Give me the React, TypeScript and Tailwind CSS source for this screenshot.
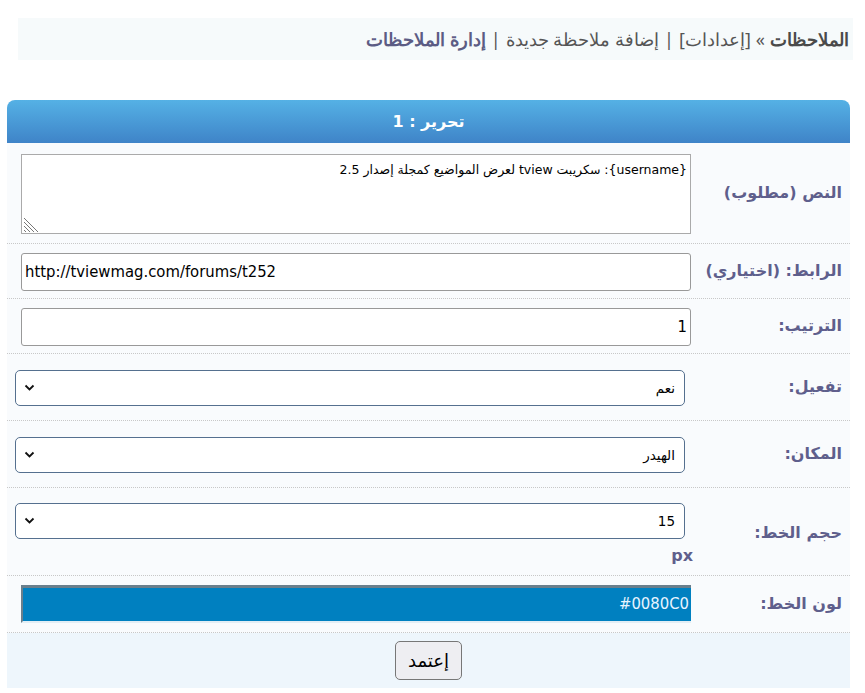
import React from "react";

const labelCls =
  "w-[150px] shrink-0 pr-[8px] flex items-center text-[16px] font-bold text-[#5f5f8c] [font-family:'DejaVu_Sans',sans-serif]";

function Sep() {
  return <div className="h-0 border-t border-dotted border-[#c8c8c8]" />;
}

function ResizeGrip() {
  return (
    <svg
      className="absolute left-[1px] bottom-[1px]"
      width="16"
      height="16"
      viewBox="0 0 16 16"
    >
      <g stroke="#777" strokeWidth="1">
        <line x1="1" y1="2" x2="15" y2="16" />
        <line x1="1" y1="6" x2="11" y2="16" />
        <line x1="1" y1="10" x2="7" y2="16" />
        <line x1="1" y1="14" x2="3" y2="16" />
      </g>
    </svg>
  );
}

function SelectBox({ value }: { value: string }) {
  return (
    <div className="relative w-[670px] h-[36px] rounded-[5px] border border-[#55708f] bg-white">
      <span className="absolute right-[9px] top-[7px] text-[13.5px] text-black [font-family:'DejaVu_Sans',sans-serif]">
        {value}
      </span>
      <svg
        className="absolute left-[8px] top-[13px]"
        width="11"
        height="8"
        viewBox="0 0 11 8"
      >
        <path d="M1.5 1.5 L5.5 5.5 L9.5 1.5" fill="none" stroke="#111" strokeWidth="1.8" />
      </svg>
    </div>
  );
}

export default function App() {
  return (
    <div
      dir="rtl"
      className="w-[865px] h-[693px] bg-white [font-family:'DejaVu_Sans',sans-serif] overflow-hidden"
    >
      <div className="pt-[18px] pr-[12px] pl-[18px]">
        <div className="h-[42px] bg-[#f6fafb] flex items-center pr-[4px] text-[18px] text-[#555] [font-family:'Noto_Sans',sans-serif]">
          <span className="font-bold text-[#4a4a4a]">الملاحظات</span>
          <span className="mx-[5px]">»</span>
          <span>[إعدادات]</span>
          <span className="mx-[5px]">|</span>
          <span>إضافة ملاحظة جديدة</span>
          <span className="mx-[5px]">|</span>
          <span className="font-bold text-[#5c5c84]">إدارة الملاحظات</span>
        </div>
      </div>

      <div className="mt-[40px] mr-[15px] ml-[7px] w-[843px]">
        <div className="h-[43px] rounded-t-[8px] bg-gradient-to-b from-[#55b1e5] to-[#3f84c8] flex items-center justify-center text-white font-bold text-[16px]">
          تحرير : 1
        </div>

        <div className="bg-[#f9fbfd]">
          {/* Row 1 */}
          <div className="flex h-[100px]">
            <div className={labelCls}>النص (مطلوب)</div>
            <div className="flex-1 pr-[9px] pt-[11px]">
              <div className="relative w-[670px] h-[80px] border border-[#aaa] bg-white">
                <div className="pr-[3px] pt-[6px] text-[12.5px] text-black [font-family:'DejaVu_Sans',sans-serif]">
                  {"{username}: سكريبت tview لعرض المواضيع كمجلة إصدار 2.5"}
                </div>
                <ResizeGrip />
              </div>
            </div>
          </div>
          <Sep />
          {/* Row 2 */}
          <div className="flex h-[54px]">
            <div className={labelCls}>الرابط: (اختياري)</div>
            <div className="flex-1 pr-[9px] pt-[9px]">
              <div
                dir="ltr"
                className="w-[670px] h-[38px] rounded-[3px] border border-[#999] bg-white flex items-center pl-[3px] text-[16.5px] text-black [font-family:'DejaVu_Sans_Condensed','DejaVu_Sans',sans-serif]"
              >
                http://tviewmag.com/forums/t252
              </div>
            </div>
          </div>
          <Sep />
          {/* Row 3 */}
          <div className="flex h-[54px]">
            <div className={labelCls}>الترتيب:</div>
            <div className="flex-1 pr-[9px] pt-[9px]">
              <div className="w-[670px] h-[38px] rounded-[3px] border border-[#999] bg-white flex items-center pr-[3px] text-[16.5px] text-black [font-family:'DejaVu_Sans_Condensed','DejaVu_Sans',sans-serif]">
                1
              </div>
            </div>
          </div>
          <Sep />
          {/* Row 4 */}
          <div className="flex h-[66px]">
            <div className={labelCls}>تفعيل:</div>
            <div className="flex-1 pr-[15px] pt-[16px]">
              <SelectBox value="نعم" />
            </div>
          </div>
          <Sep />
          {/* Row 5 */}
          <div className="flex h-[66px]">
            <div className={labelCls}>المكان:</div>
            <div className="flex-1 pr-[15px] pt-[16px]">
              <SelectBox value="الهيدر" />
            </div>
          </div>
          <Sep />
          {/* Row 6 */}
          <div className="flex h-[87px]">
            <div className={labelCls + " pt-[2px]"}>حجم الخط:</div>
            <div className="flex-1 pr-[15px] pt-[15px]">
              <SelectBox value="15" />
              <div className="mr-[-8px] mt-[7px] text-[16px] font-bold text-[#5f5f8c] leading-[20px]">
                px
              </div>
            </div>
          </div>
          <Sep />
          {/* Row 7 */}
          <div className="flex h-[56px]">
            <div className={labelCls}>لون الخط:</div>
            <div className="flex-1 pr-[9px] pt-[9px]">
              <div className="w-[670px] h-[38px] bg-[#0080c0] border-t-[3px] border-l-[2px] border-t-[#6a7f8c] border-l-[#6a7f8c] border-b-[2px] border-b-[#e3eef5] flex items-center pr-[2px] text-[16.5px] text-[#e8f4ff] [font-family:'DejaVu_Sans_Condensed','DejaVu_Sans',sans-serif]">
                #0080C0
              </div>
            </div>
          </div>
          <Sep />
          {/* Row 8 */}
          <div className="h-[55px] bg-[#eef6fc] flex justify-center pt-[8px]">
            <div className="w-[67px] h-[39px] rounded-[5px] border border-[#777] bg-[#eeeef2] flex items-center justify-center text-[18px] text-black [font-family:'DejaVu_Sans',sans-serif]">
              إعتمد
            </div>
          </div>
        </div>
      </div>
    </div>
  );
}
